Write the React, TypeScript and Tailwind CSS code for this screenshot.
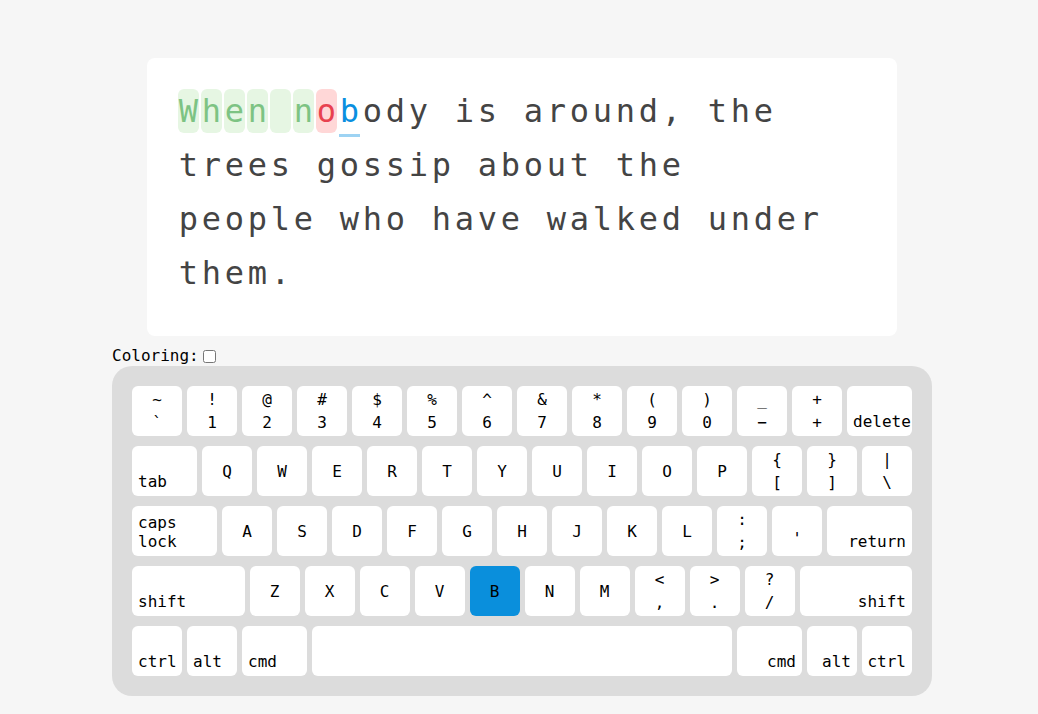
import { Fragment } from "react";

const text = "When nobody is around, the trees gossip about the people who have walked under them.";
const typed = 7; // chars already typed
const wrongAt = 6;

const mono = { fontFamily: '"DejaVu Sans Mono", "Liberation Mono", monospace' };

type Key = {
  top?: string;
  bottom?: string;
  label?: string;
  align?: "left" | "right";
  w?: string;
  active?: boolean;
  extra?: string;
};

const rows: Key[][] = [
  [
    { top: "~", bottom: "`" }, { top: "!", bottom: "1" }, { top: "@", bottom: "2" }, { top: "#", bottom: "3" },
    { top: "$", bottom: "4" }, { top: "%", bottom: "5" }, { top: "^", bottom: "6" }, { top: "&", bottom: "7" },
    { top: "*", bottom: "8" }, { top: "(", bottom: "9" }, { top: ")", bottom: "0" }, { top: "_", bottom: "−" },
    { top: "+", bottom: "+" }, { label: "delete", align: "left", w: "w-[65px]" },
  ],
  [
    { label: "tab", align: "left", w: "w-[65px]" },
    ..."QWERTYUIOP".split("").map((c) => ({ top: c })),
    { top: "{", bottom: "[" }, { top: "}", bottom: "]" }, { top: "|", bottom: "\\" },
  ],
  [
    { label: "caps\nlock", align: "left", w: "w-[85px]" },
    ..."ASDFGHJKL".split("").map((c) => ({ top: c })),
    { top: ":", bottom: ";" }, { top: "'", extra: "pt-[14px]" },
    { label: "return", align: "right", w: "w-[85px]" },
  ],
  [
    { label: "shift", align: "left", w: "flex-1" },
    ..."ZXCVBNM".split("").map((c) => ({ top: c, active: c === "B" })),
    { top: "<", bottom: "," }, { top: ">", bottom: "." }, { top: "?", bottom: "/" },
    { label: "shift", align: "right", w: "flex-1" },
  ],
  [
    { label: "ctrl", align: "left" }, { label: "alt", align: "left" },
    { label: "cmd", align: "left", w: "w-[65px]" },
    { label: "", w: "w-[420px]" },
    { label: "cmd", align: "right", w: "w-[65px]" },
    { label: "alt", align: "right" }, { label: "ctrl", align: "right" },
  ],
];

function KeyCap({ k }: { k: Key }) {
  const base = `h-[50px] rounded-md text-black text-[16px] leading-[19px] ${k.w ?? "w-[50px]"} ${
    k.active ? "bg-[#0a8fdc]" : "bg-white"
  } ${k.extra ?? ""}`;
  if (k.label !== undefined) {
    return (
      <div
        className={`${base} flex flex-col justify-end px-[6px] pb-[5px] whitespace-pre ${
          k.align === "right" ? "items-end text-right" : "items-start"
        }`}
      >
        {k.label}
      </div>
    );
  }
  if (k.bottom !== undefined) {
    return (
      <div className={`${base} flex flex-col items-center justify-center gap-1`}>
        <span>{k.top}</span>
        <span>{k.bottom}</span>
      </div>
    );
  }
  return <div className={`${base} flex items-center justify-center`}>{k.top}</div>;
}

function Char({ ch, idx }: { ch: string; idx: number }) {
  let cls = "text-[#444]";
  if (idx < typed) cls = idx === wrongAt ? "bg-[#ffd7d7] text-[#e8414f]" : "bg-[#e6f6e3] text-[#7dc383]";
  if (idx === typed) cls = "text-[#0a8fe0]";
  return (
    <span className={`relative w-[21px] h-[44px] mx-px rounded-md flex items-center justify-center ${cls}`}>
      {ch === " " ? "\u00a0" : ch}
      {idx === typed && <span className="absolute left-0 right-0 -bottom-[4px] h-[3px] bg-[#9dd3f3]" />}
    </span>
  );
}

export default function App() {
  // split into words keeping the trailing space with each word
  const words: { chars: string; start: number }[] = [];
  let pos = 0;
  text.split(/(?<= )/).forEach((w) => {
    words.push({ chars: w, start: pos });
    pos += w.length;
  });

  return (
    <div className="min-h-screen bg-[#f6f6f6] pt-[58px]" style={mono}>
      <div className="w-[750px] ml-[147px] bg-white rounded-lg pt-[31px] pb-[41px] pl-[30px] pr-[34px]">
        <div className="flex flex-wrap gap-y-[10px] text-[32px] leading-[44px]">
          {words.map((w) => (
            <span key={w.start} className="flex whitespace-nowrap">
              {w.chars.split("").map((ch, i) => (
                <Fragment key={i}>
                  <Char ch={ch} idx={w.start + i} />
                </Fragment>
              ))}
            </span>
          ))}
        </div>
      </div>

      <div className="ml-[112px] mt-[10px] h-[20px] flex items-center gap-1 text-[16px] leading-[20px] text-black">
        <span>Coloring:</span>
        <input type="checkbox" className="w-[13px] h-[13px] m-0" />
      </div>

      <div className="ml-[112px] w-[820px] rounded-[20px] bg-[#dcdcdc] p-5 flex flex-col gap-[10px]">
        {rows.map((row, r) => (
          <div key={r} className="flex gap-[5px]">
            {row.map((k, i) => (
              <KeyCap key={i} k={k} />
            ))}
          </div>
        ))}
      </div>
    </div>
  );
}
